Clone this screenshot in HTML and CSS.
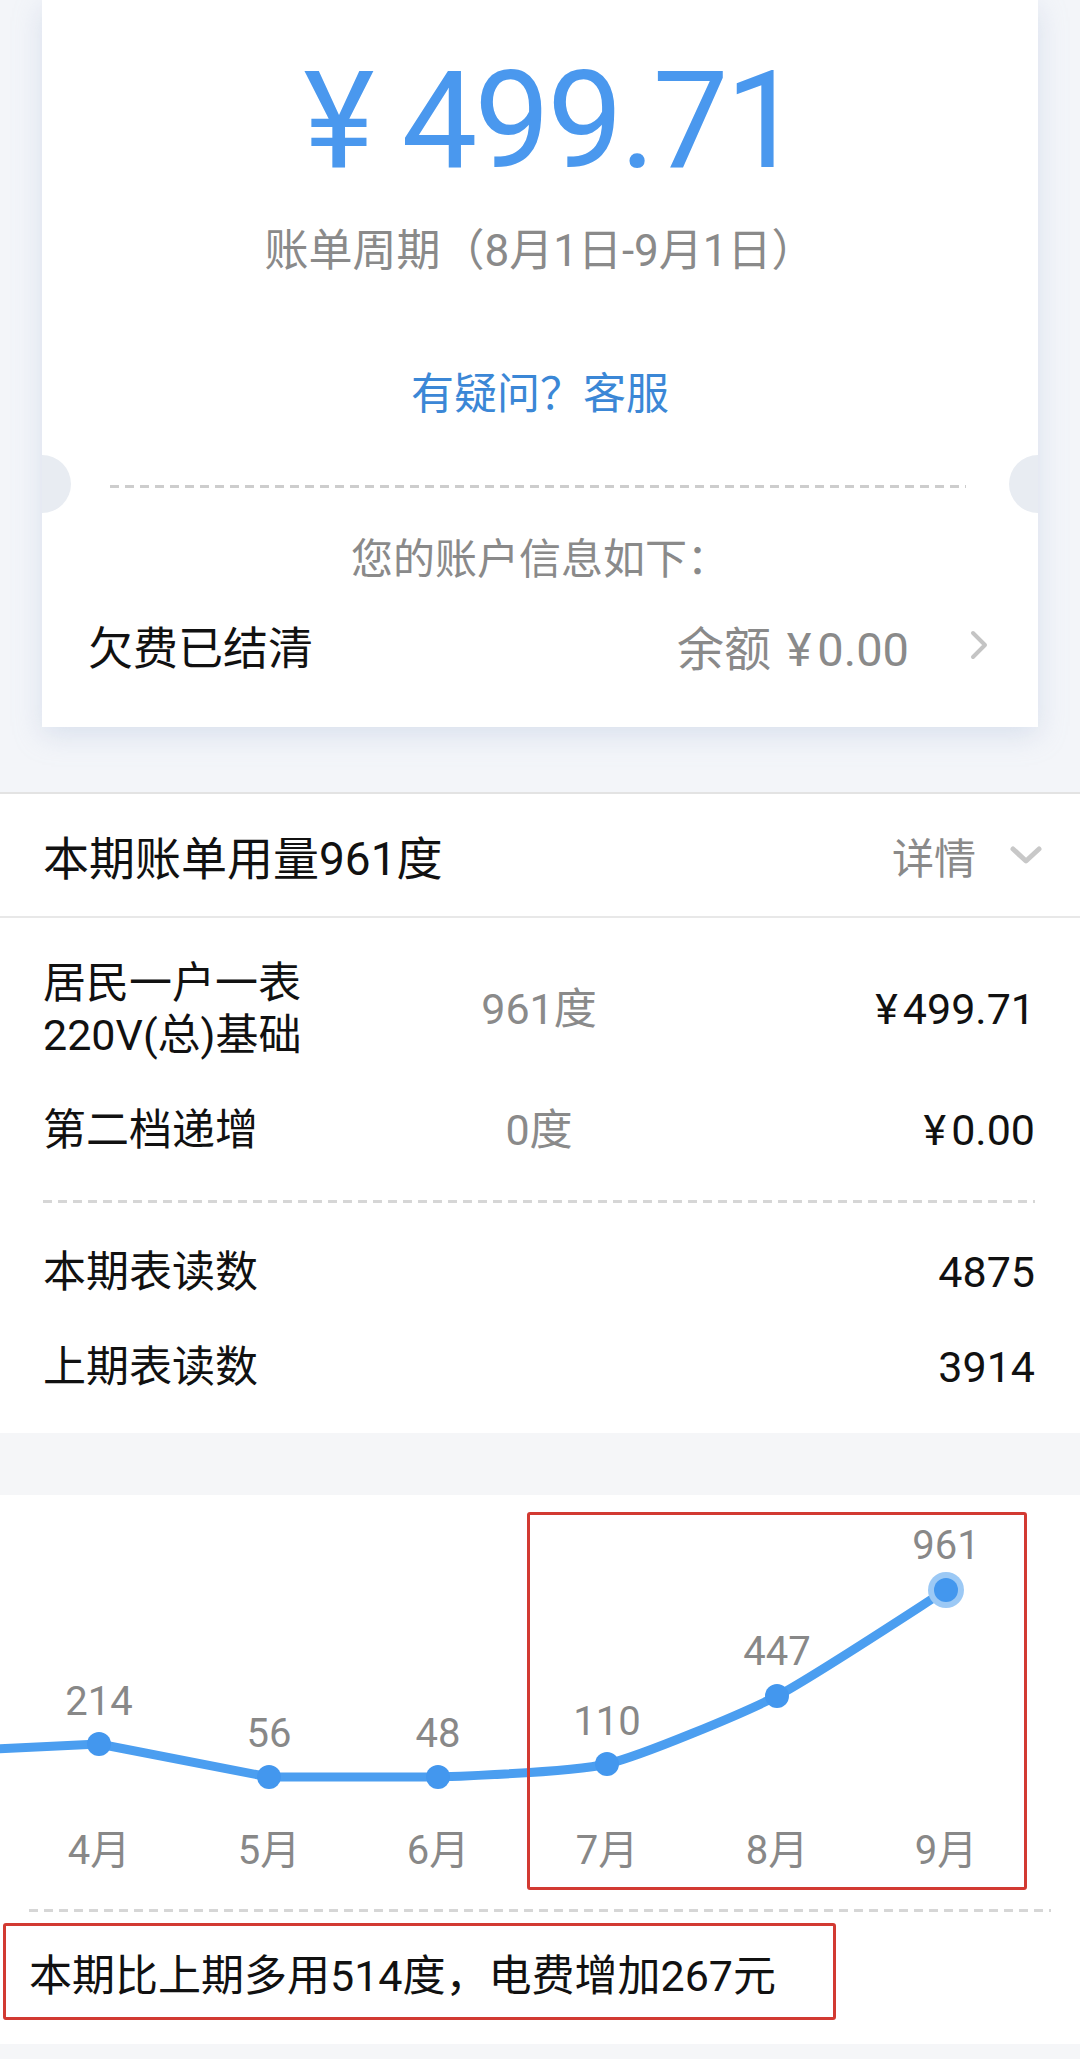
FILE: index.html
```html
<!DOCTYPE html>
<html lang="zh-CN">
<head>
<meta charset="utf-8">
<title>电费账单</title>
<link rel="stylesheet" href="styles.css">
</head>
<body>
<div class="top">
  <div class="card">
    <div class="amount"><span class="yen">¥</span>499.71</div>
    <div class="period">账单周期（8月1日-9月1日）</div>
    <div class="help">有疑问？客服</div>
    <div class="tear"></div>
    <span class="notch notch-l"></span>
    <span class="notch notch-r"></span>
    <div class="info-title">您的账户信息如下：</div>
    <div class="account">
      <span class="status">欠费已结清</span>
      <span class="balance">余额 <span class="cur">¥</span>0.00</span>
      <svg class="chev-r" width="18" height="30" viewBox="0 0 18 30"><polyline points="3,3 15,15 3,27" fill="none" stroke="#c4c4c4" stroke-width="4" stroke-linecap="round" stroke-linejoin="round"/></svg>
    </div>
  </div>
</div>

<section class="usage">
  <div class="usage-head">
    <span class="usage-title">本期账单用量961度</span>
    <span class="detail">详情</span>
    <svg class="chev-d" width="32" height="18" viewBox="0 0 32 18"><polyline points="3,3 16,15 29,3" fill="none" stroke="#c8c8c8" stroke-width="5" stroke-linecap="round" stroke-linejoin="round"/></svg>
  </div>
  <div class="rows">
    <div class="row"><span class="name">居民一户一表<br>220V(总)基础</span><span class="qty">961度</span><span class="fee"><span class="cur">¥</span>499.71</span></div>
    <div class="row"><span class="name">第二档递增</span><span class="qty">0度</span><span class="fee"><span class="cur">¥</span>0.00</span></div>
    <div class="dash"></div>
    <div class="row"><span class="name">本期表读数</span><span class="qty"></span><span class="fee">4875</span></div>
    <div class="row"><span class="name">上期表读数</span><span class="qty"></span><span class="fee">3914</span></div>
  </div>
</section>

<section class="trend">
  <div class="chart">
    <svg class="chart-svg" width="1080" height="406" viewBox="0 0 1080 406">
      <path d="M -70 257 L 99 249 L 269 282 L 438 282 C 471.8 280.7 573.1 277.1 607 269 C 640.9 260.9 743.1 218.4 777 201 C 810.9 183.6 929.1 105.6 946 95" fill="none" stroke="#4b9ef0" stroke-width="9" stroke-linecap="round" stroke-linejoin="round"/>
      <circle cx="99" cy="249" r="12" fill="#4397ee"/>
      <circle cx="269" cy="282" r="12" fill="#4397ee"/>
      <circle cx="438" cy="282" r="12" fill="#4397ee"/>
      <circle cx="607" cy="269" r="12" fill="#4397ee"/>
      <circle cx="777" cy="201" r="12" fill="#4397ee"/>
      <circle cx="946" cy="95" r="18" fill="#9cc9f5"/>
      <circle cx="946" cy="95" r="12" fill="#4397ee"/>
      <g class="val">
        <text x="99" y="220">214</text>
        <text x="269" y="252">56</text>
        <text x="438" y="252">48</text>
        <text x="607" y="240">110</text>
        <text x="777" y="170">447</text>
        <text x="946" y="64">961</text>
      </g>
      <g class="mon">
        <text x="99" y="369">4月</text>
        <text x="269" y="369">5月</text>
        <text x="438" y="369">6月</text>
        <text x="607" y="369">7月</text>
        <text x="777" y="369">8月</text>
        <text x="946" y="369">9月</text>
      </g>
    </svg>
    <div class="mark"></div>
  </div>
  <div class="dash dash-wide"></div>
  <div class="summary">本期比上期多用514度，电费增加267元</div>
</section>
<div class="foot"></div>
</body>
</html>
```

FILE: styles.css
```css
html, body {
  margin: 0;
  padding: 0;
}
body {
  width: 1080px;
  background: #f5f6f8;
  font-family: Roboto, "Noto Sans CJK SC", sans-serif;
  color: #111;
}

.top {
  background: #f3f5f9;
  padding: 0 42px 65px;
}
.card {
  position: relative;
  background: #fff;
  box-shadow: 0 8px 26px rgba(170, 185, 216, 0.35);
  padding: 54px 0 52px;
  text-align: center;
}
.amount {
  font-size: 135px;
  line-height: 134px;
  color: #4a98ee;
  letter-spacing: -3px;
  padding-left: 22px;
}
.yen {
  margin-right: 30px;
}
.period {
  margin-top: 33px;
  font-size: 44px;
  line-height: 60px;
  color: #8a8a8a;
}
.help {
  margin-top: 83px;
  font-size: 43px;
  line-height: 60px;
  color: #3b87d6;
}
.tear {
  margin: 61px 72px 0 68px;
  height: 3px;
  background-image: linear-gradient(to right, #cdcdcd 0 9px, transparent 9px 15px);
  background-size: 15px 3px;
  background-repeat: repeat-x;
}
.notch {
  position: absolute;
  top: 455px;
  width: 29px;
  height: 58px;
  background: #e8ecf2;
}
.notch-l {
  left: 0;
  border-radius: 0 29px 29px 0;
}
.notch-r {
  right: 0;
  border-radius: 29px 0 0 29px;
}

.info-title {
  margin-top: 42px;
  font-size: 42px;
  line-height: 60px;
  color: #8a8a8a;
}
.account {
  margin-top: 25px;
  height: 60px;
  display: flex;
  align-items: center;
  padding: 0 50px 0 46px;
}
.status {
  flex: 1;
  text-align: left;
  font-size: 45px;
  color: #111;
}
.balance {
  font-size: 47px;
  color: #8a8a8a;
}
.balance .cur {
  margin: 0 6px 0 4px;
}
.chev-r {
  margin-left: 61px;
  display: block;
}

.usage {
  background: #fff;
  border-top: 2px solid #e3e3e3;
}
.usage-head {
  height: 122px;
  display: flex;
  align-items: center;
  padding: 0 38px 0 43px;
  border-bottom: 2px solid #e8e8e8;
}
.usage-title {
  flex: 1;
  font-size: 46px;
}
.detail {
  font-size: 42px;
  color: #8a8a8a;
}
.chev-d {
  display: block;
  margin-left: 34px;
}
.rows {
  padding: 39px 45px 40px 43px;
}
.row {
  display: grid;
  grid-template-columns: 1fr 1fr 1fr;
  align-items: center;
  font-size: 43px;
  line-height: 52px;
}
.row + .row,
.dash + .row {
  margin-top: 43px;
}
.qty {
  text-align: center;
  color: #8a8a8a;
}
.fee {
  text-align: right;
}
.fee .cur {
  margin-right: 5px;
}
.dash {
  height: 3px;
  margin-top: 44px;
  background-image: linear-gradient(to right, #d6d6d6 0 9px, transparent 9px 15px);
  background-size: 15px 3px;
  background-repeat: repeat-x;
}

.trend {
  margin-top: 62px;
  background: #fff;
  padding-bottom: 24px;
}
.chart {
  position: relative;
  height: 406px;
}
.chart-svg {
  display: block;
}
.val text,
.mon text {
  font-family: Roboto, "Noto Sans CJK SC", sans-serif;
  font-size: 40px;
  fill: #888;
  text-anchor: middle;
}
.mark {
  position: absolute;
  left: 527px;
  top: 17px;
  width: 500px;
  height: 378px;
  box-sizing: border-box;
  border: 3px solid #d23a32;
  border-radius: 3px;
}
.dash-wide {
  margin: 8px 29px 0;
}
.summary {
  margin: 11px 0 0 3px;
  width: 833px;
  height: 97px;
  box-sizing: border-box;
  border: 3px solid #d23a32;
  border-radius: 3px;
  display: flex;
  align-items: center;
  padding-left: 23px;
  font-size: 43px;
  color: #111;
}
.foot {
  height: 16px;
  background: #f5f6f8;
}
```
